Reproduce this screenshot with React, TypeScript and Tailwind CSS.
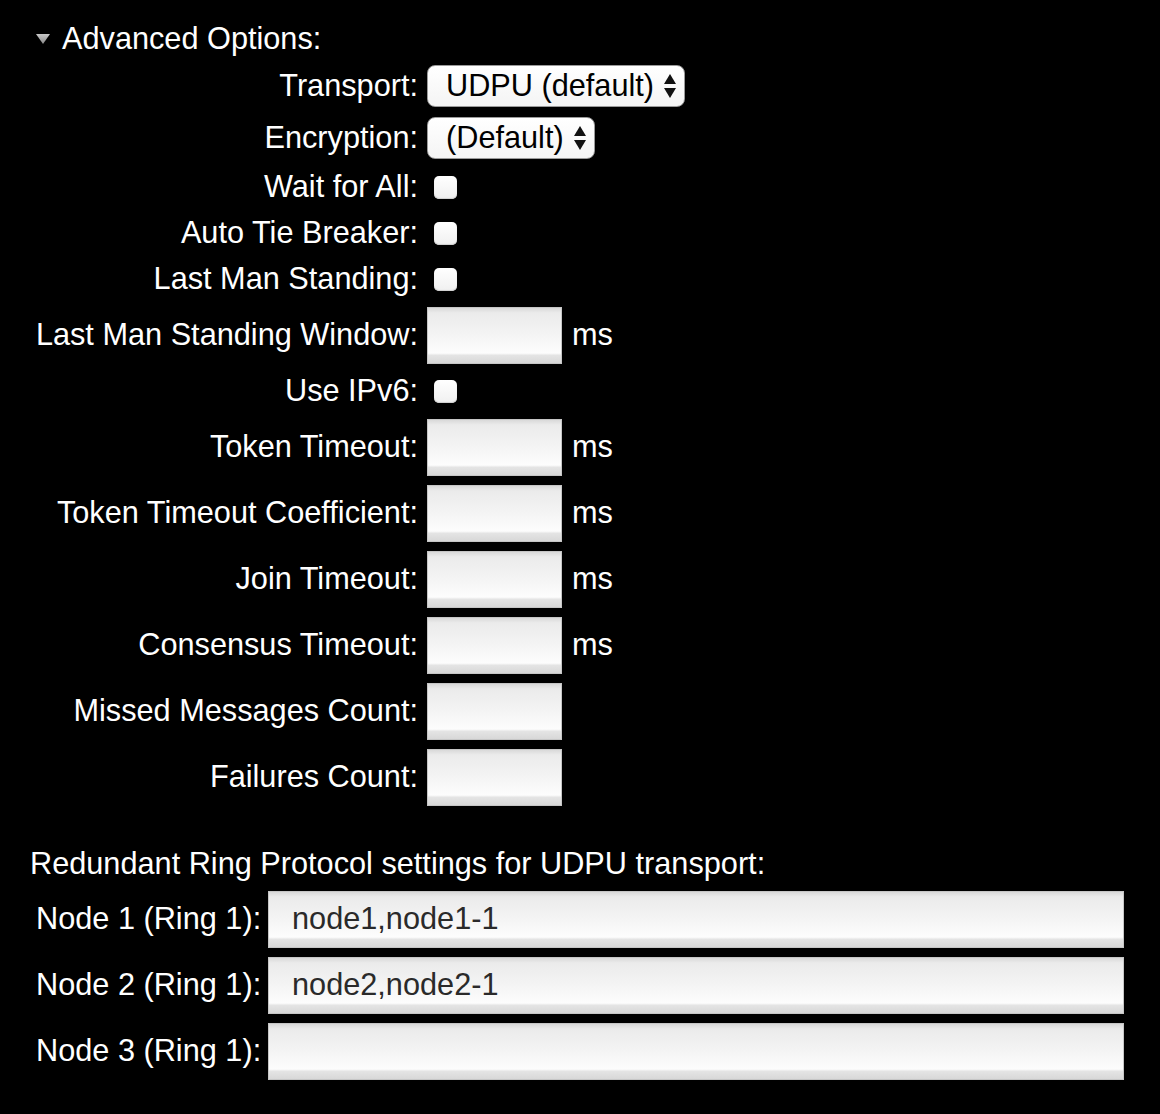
import React from "react";

const inputBg =
  "bg-[linear-gradient(to_bottom,#d9d9d9_0px,#ebebeb_5px,#f3f3f3_45%,#fdfdfd_82%,#e4e4e4_86%,#d8d8d8_100%)]";

const checkRows = ["Wait for All:", "Auto Tie Breaker:", "Last Man Standing:"];

const Arrows = () => (
  <svg width="16" height="30" viewBox="0 0 16 30" className="shrink-0">
    <path d="M8 3 L14 13 L2 13 Z" fill="#111" />
    <path d="M2 17 L14 17 L8 27 Z" fill="#111" />
  </svg>
);

const Select = ({ value, width }: { value: string; width: string }) => (
  <div
    className={`${width} ml-[9px] h-[42px] flex items-center justify-between pl-[18px] pr-[6px] rounded-[8px] border border-[#9a9a9a] bg-[linear-gradient(to_bottom,#ffffff,#f4f4f4)] text-black`}
  >
    <span className="whitespace-nowrap">{value}</span>
    <Arrows />
  </div>
);

const Checkbox = () => (
  <div className="ml-[16px] w-[23px] h-[23px] rounded-[5px] bg-[linear-gradient(to_bottom,#ffffff,#f0f0f0)] shadow-[inset_0_-1px_1px_#cfcfcf]" />
);

const SmallInput = () => (
  <div className={`ml-[9px] w-[135px] h-[57px] border border-[#c6c6c6] ${inputBg}`} />
);

const Row = ({
  label,
  h,
  children,
}: {
  label: string;
  h: string;
  children: React.ReactNode;
}) => (
  <div className={`flex items-center ${h}`}>
    <div className="w-[418px] text-right whitespace-nowrap">{label}</div>
    {children}
  </div>
);

const msRows = [
  { label: "Token Timeout:", ms: true },
  { label: "Token Timeout Coefficient:", ms: true },
  { label: "Join Timeout:", ms: true },
  { label: "Consensus Timeout:", ms: true },
  { label: "Missed Messages Count:", ms: false },
  { label: "Failures Count:", ms: false },
];

const nodes = [
  { label: "Node 1 (Ring 1):", value: "node1,node1-1" },
  { label: "Node 2 (Ring 1):", value: "node2,node2-1" },
  { label: "Node 3 (Ring 1):", value: "" },
];

export default function App() {
  return (
    <div className="w-[1160px] min-h-[1114px] pt-[19px] bg-black text-white text-[30.7px] leading-[34px] font-['Liberation_Sans',Arial,sans-serif]">
      {/* header */}
      <div className="flex items-center h-[40px] mb-[1px]">
        <svg width="14" height="10" viewBox="0 0 14 10" className="ml-[36px]">
          <defs>
            <linearGradient id="tri" x1="0" y1="0" x2="0" y2="1">
              <stop offset="0" stopColor="#c8c8c8" />
              <stop offset="1" stopColor="#8a8a8a" />
            </linearGradient>
          </defs>
          <path d="M0 0 L14 0 L7 10 Z" fill="url(#tri)" />
        </svg>
        <span className="ml-[12px]">Advanced Options:</span>
      </div>

      <Row label="Transport:" h="h-[52px]">
        <Select value="UDPU (default)" width="w-[258px]" />
      </Row>
      <Row label="Encryption:" h="h-[52px]">
        <Select value="(Default)" width="w-[168px]" />
      </Row>
      {checkRows.map((l) => (
        <Row key={l} label={l} h="h-[46px]">
          <Checkbox />
        </Row>
      ))}
      <Row label="Last Man Standing Window:" h="h-[66px]">
        <SmallInput />
        <span className="ml-[10px]">ms</span>
      </Row>
      <Row label="Use IPv6:" h="h-[46px]">
        <Checkbox />
      </Row>
      {msRows.map((r) => (
        <Row key={r.label} label={r.label} h="h-[66px]">
          <SmallInput />
          {r.ms && <span className="ml-[10px]">ms</span>}
        </Row>
      ))}

      {/* redundant ring */}
      <div className="h-[40px] mt-[34px] mb-[2px] pl-[30px] flex items-center whitespace-nowrap">
        Redundant Ring Protocol settings for UDPU transport:
      </div>
      {nodes.map((n) => (
        <div key={n.label} className="flex items-center h-[66px] pl-[36px]">
          <div className="w-[232px] whitespace-nowrap">{n.label}</div>
          <div
            className={`w-[856px] h-[57px] flex items-center pl-[23px] border border-[#c6c6c6] text-[#2a2a2a] ${inputBg}`}
          >
            {n.value}
          </div>
        </div>
      ))}
    </div>
  );
}
